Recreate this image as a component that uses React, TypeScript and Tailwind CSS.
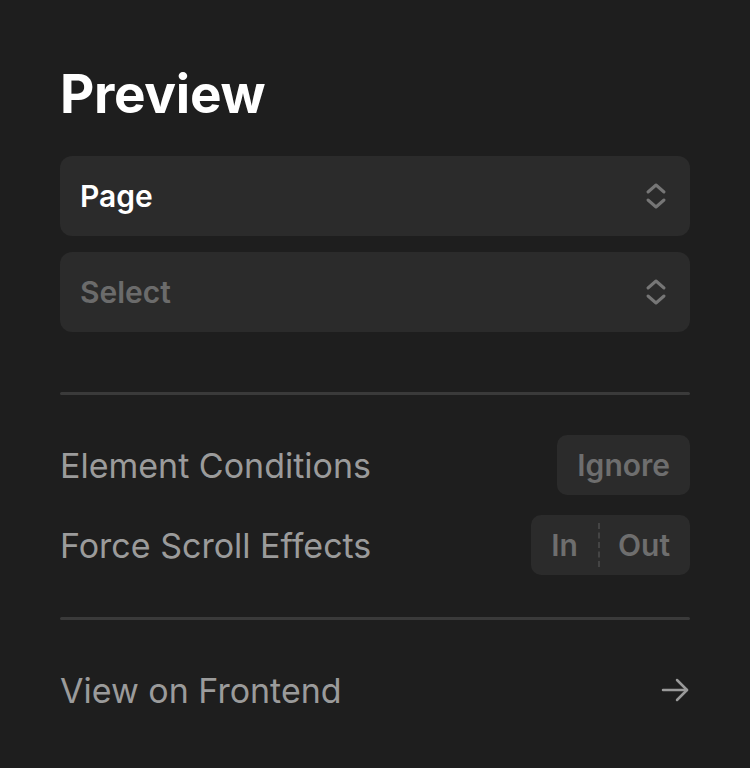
import React from 'react';

const font = { fontFamily: 'Inter, "Noto Sans", sans-serif' };

// Up/down chevrons used by the select boxes
function UpDownIcon() {
    return (
        <svg width="24" height="30" viewBox="0 0 24 30" fill="none" stroke="#767676" strokeWidth="3" strokeLinecap="round" strokeLinejoin="round">
            <path d="M4 11 L12 4 L20 11" />
            <path d="M4 19 L12 26 L20 19" />
        </svg>
    );
}

function ArrowRight() {
    return (
        <svg width="30" height="24" viewBox="0 0 30 24" fill="none" stroke="#9a9a9a" strokeWidth="2.5" strokeLinecap="round" strokeLinejoin="round">
            <path d="M3 12 H27" />
            <path d="M17 2 L27 12 L17 22" />
        </svg>
    );
}

function SelectBox({ label, placeholder }: { label: string; placeholder?: boolean }) {
    return (
        <div className="flex h-[80px] items-center justify-between rounded-[12px] bg-[#2b2b2b] pl-[20px] pr-[22px]">
            <span className={`text-[30px] font-semibold ${placeholder ? 'text-[#6b6b6b]' : 'text-white'}`}>{label}</span>
            <UpDownIcon />
        </div>
    );
}

export default function App() {
    return (
        <div className="min-h-screen w-[750px] bg-[#1e1e1e] px-[60px] pt-[62px]" style={font}>
            <h1 className="text-[53px] font-bold leading-[64px] tracking-[-0.3px] text-white">Preview</h1>

            <div className="mt-[30px] flex flex-col gap-[16px]">
                <SelectBox label="Page" />
                <SelectBox label="Select" placeholder />
            </div>

            <div className="mt-[60px] h-[3px] rounded-full bg-[#3a3a3a]" />

            <div className="mt-[40px] flex flex-col gap-[20px]">
                <div className="flex h-[60px] items-center justify-between">
                    <span className="text-[34px] text-[#9b9b9b]">Element Conditions</span>
                    <button className="h-[60px] rounded-[10px] bg-[#2b2b2b] px-[20px] text-[30px] font-semibold text-[#6e6e6e]">
                        Ignore
                    </button>
                </div>
                <div className="flex h-[60px] items-center justify-between">
                    <span className="text-[34px] text-[#9b9b9b]">Force Scroll Effects</span>
                    <div className="flex h-[60px] items-center rounded-[10px] bg-[#2b2b2b] text-[30px] font-semibold text-[#6e6e6e]">
                        <span className="pl-[20px] pr-[20px]">In</span>
                        <span className="h-[44px] border-l-2 border-dashed border-[#444]" />
                        <span className="pl-[18px] pr-[20px]">Out</span>
                    </div>
                </div>
            </div>

            <div className="mt-[42px] h-[3px] rounded-full bg-[#3a3a3a]" />

            <div className="mt-[40px] flex h-[60px] items-center justify-between">
                <span className="text-[34px] text-[#9b9b9b]">View on Frontend</span>
                <ArrowRight />
            </div>
        </div>
    );
}
